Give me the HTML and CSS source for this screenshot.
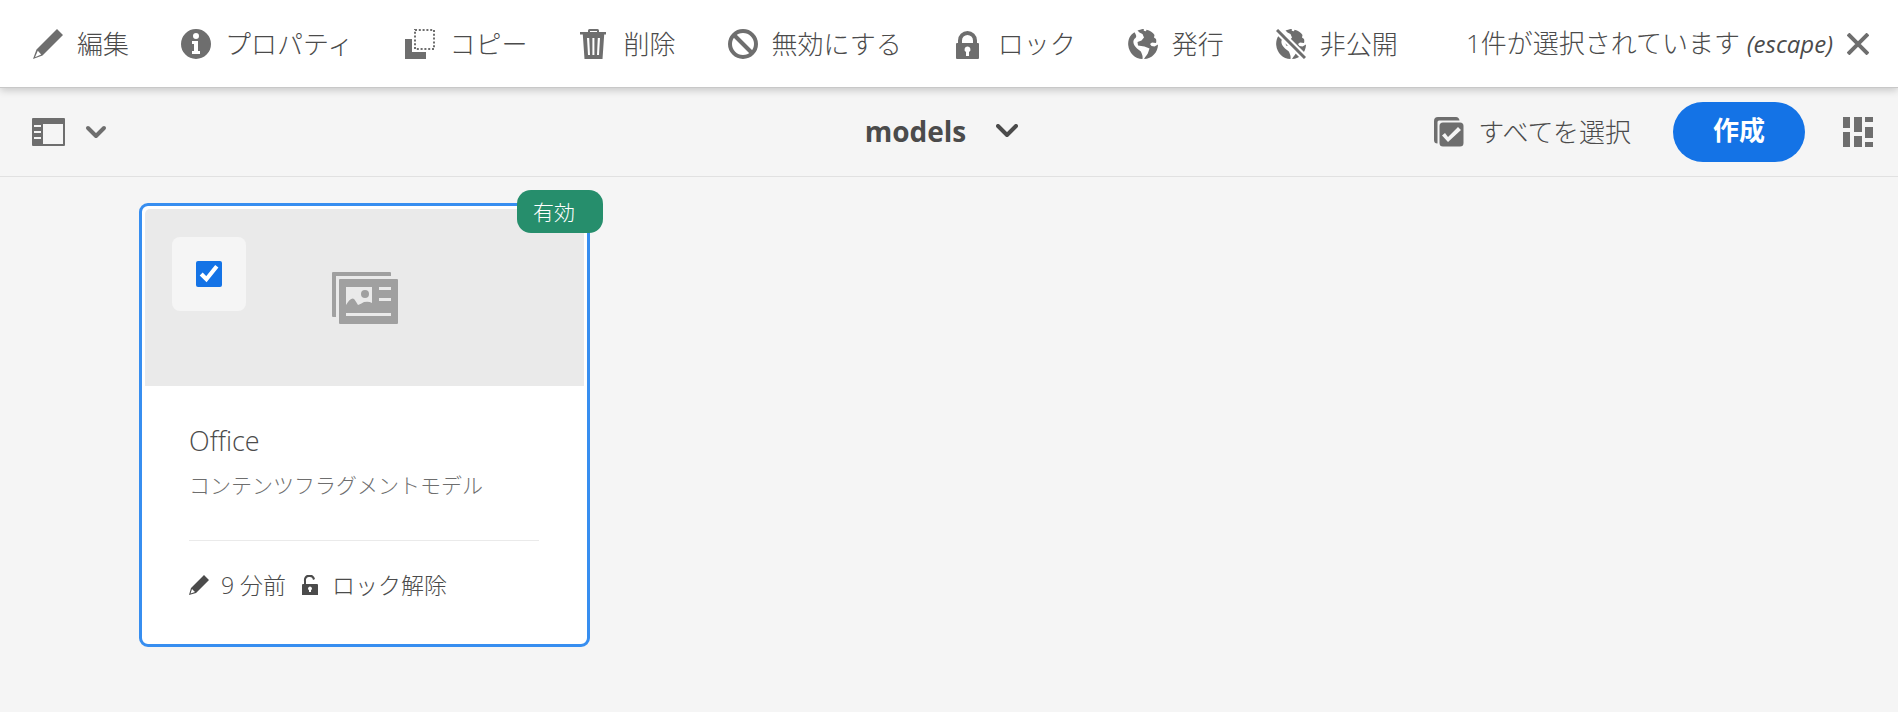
FILE: index.html
```html
<!DOCTYPE html>
<html lang="ja">
<head>
<meta charset="utf-8">
<meta name="viewport" content="width=device-width, initial-scale=1">
<title>models</title>
<link rel="stylesheet" href="styles.css">
</head>
<body>
<header class="selection-bar">
  <div class="actions" role="toolbar">
    <button class="action" type="button">
      <svg class="icon" viewBox="0 0 30 30"><path d="M24 0l6 6L9.500 26.500 0 30l3.500-9.500zM4.800 21.800L2 28.200l6.200-2.600z" fill-rule="evenodd"/></svg>
      <span>編集</span>
    </button>
    <button class="action" type="button">
      <svg class="icon" viewBox="0 0 30 30"><path fill-rule="evenodd" d="M15 0a15 15 0 1 0 0 30 15 15 0 0 0 0-30zm0 4a3 3 0 1 1 0 6 3 3 0 0 1 0-6zm-4 8h6v10h2v3h-8v-3h2v-7h-2z"/></svg>
      <span>プロパティ</span>
    </button>
    <button class="action" type="button">
      <svg class="icon" viewBox="0 0 30 30"><path d="M0 10h7v13h14v7H0z"/><rect x="10" y="1" width="19" height="19" fill="none" stroke="currentColor" stroke-width="2" stroke-dasharray="2 1.800"/></svg>
      <span>コピー</span>
    </button>
    <button class="action" type="button">
      <svg class="icon" viewBox="0 0 30 30"><path fill-rule="evenodd" d="M9 3V1.500Q9 0 10.500 0h8Q20 0 20 1.500V3h7v2.500h-1.800L23.500 30h-18L3.800 5.500H1V3zm2 0h7V2h-7zM8 9l1 17h2L10.200 9zm5.400 0v17h2V9zm5.400 0L18 26h2L21 9z"/></svg>
      <span>削除</span>
    </button>
    <button class="action" type="button">
      <svg class="icon" viewBox="0 0 30 30" fill="none" stroke="currentColor" stroke-width="4"><circle cx="15" cy="15" r="13"/><path d="M6 6l18 18"/></svg>
      <span>無効にする</span>
    </button>
    <button class="action" type="button">
      <svg class="icon" viewBox="0 0 30 30"><path fill-rule="evenodd" d="M4 14v-2.500a9.500 9.500 0 0 1 19 0V14h1q1 0 1 1v14q0 1-1 1H3q-1 0-1-1V15q0-1 1-1zm4 0h11v-2.500a5.500 5.500 0 0 0-11 0zM13.500 17.500a3 3 0 0 0-1.500 5.600V27h3v-3.900a3 3 0 0 0-1.500-5.600z"/></svg>
      <span>ロック</span>
    </button>
    <button class="action" type="button">
      <svg class="icon" viewBox="0 0 30 30"><path d="M6.500 3.200C1.500 6 0 11 .2 16 1 24 7 30 14.500 30c.5-3-.5-4.500-1-6-.5-2.500-3-3-4.500-4.500C7 17.500 6 16 5.500 14 5 11.500 6 10 7.500 9 9 7.500 8 5.500 6.500 3.200zM9.500 1.500l5-1.500 1.500.2-.3 1.500 2.300.5.500-1.500C22 1.500 25 3.500 26.500 6l-.5 2.500 2 1.500c.5 2 .3 3 0 4l-4-.5-2 1.500 1.500 2 3 .5 3.500-2C30 23 24 30 16 30c1.500-3 4-4.500 4.500-7.500l1-3-5-2-6.500-1-.5-3.500 4-1.500 2.500-3-1.500-3.500-3-1.500z"/></svg>
      <span>発行</span>
    </button>
    <button class="action" type="button">
      <svg class="icon" viewBox="0 0 30 30"><path d="M6.500 3.200C1.500 6 0 11 .2 16 1 24 7 30 14.500 30c.5-3-.5-4.500-1-6-.5-2.500-3-3-4.500-4.500C7 17.500 6 16 5.500 14 5 11.500 6 10 7.500 9 9 7.500 8 5.500 6.500 3.200zM9.500 1.500l5-1.500 1.500.2-.3 1.500 2.300.5.500-1.500C22 1.500 25 3.500 26.500 6l-.5 2.500 2 1.500c.5 2 .3 3 0 4l-4-.5-2 1.500 1.500 2 3 .5 3.500-2C30 23 24 30 16 30c1.500-3 4-4.500 4.500-7.500l1-3-5-2-6.500-1-.5-3.500 4-1.500 2.500-3-1.500-3.500-3-1.500z"/><path d="M1 1l28 28" stroke="#fff" stroke-width="7"/><path d="M1 1l28 28" stroke="currentColor" stroke-width="3"/></svg>
      <span>非公開</span>
    </button>
  </div>
  <button class="deselect" type="button">
    <span>1件が選択されています <em>(escape)</em></span>
    <svg class="close" viewBox="0 0 22 22" fill="none" stroke="currentColor" stroke-width="4"><path d="M1 1l20 20M21 1L1 21"/></svg>
  </button>
</header>

<nav class="view-bar">
  <button class="rail-toggle" type="button" aria-label="サイドパネル">
    <svg class="rail-icon" viewBox="0 0 33 28"><path fill-rule="evenodd" d="M1 0h31q1 0 1 1v26q0 1-1 1H1q-1 0-1-1V1q0-1 1-1zm10 6v20h20V6zM2 7v2h7V7zm0 6v2h7v-2zm0 6v2h7v-2z"/></svg>
    <svg class="chevron" viewBox="0 0 22 14"><path d="M3 3l8 8 8-8"/></svg>
  </button>
  <button class="crumb" type="button">
    <span>models</span>
    <svg class="chevron" viewBox="0 0 22 14"><path d="M2 2l9 9 9-9"/></svg>
  </button>
  <div class="view-tools">
    <button class="select-all" type="button">
      <svg class="icon" viewBox="0 0 30 30"><path d="M4 0h18q3 0 3.500 3.500H5Q3.500 3.500 3.500 5v21.500Q0 26.500 0 23V4q0-4 4-4z"/><path fill-rule="evenodd" d="M9 5.500h17q3.500 0 3.500 3.500v17q0 3.500-3.500 3.500H9q-3.500 0-3.500-3.500V9q0-3.500 3.500-3.500zM8 18.500l6 6.500L27 13l-3-3-10 10-3-4z"/></svg>
      <span>すべてを選択</span>
    </button>
    <button class="create" type="button">作成</button>
    <button class="layout-toggle" type="button" aria-label="カード表示">
      <svg class="icon" viewBox="0 0 30 30"><path d="M0 0h7v11H0zM0 15h7v15H0zM11 0h8v15h-8zM11 19h8v11h-8zM22 0h8v5h-8zM22 10h8v11h-8zM22 25h8v5h-8z"/></svg>
    </button>
  </div>
</nav>

<main class="collection">
  <article class="card">
    <div class="asset">
      <label class="tick"><input type="checkbox" checked aria-label="Office を選択"></label>
      <svg class="model-icon" viewBox="0 0 66 52"><path d="M1 0h57q1 0 1 1v3H4v41H1q-1 0-1-1V1q0-1 1-1z"/><path fill-rule="evenodd" d="M8 7h57q1 0 1 1v43q0 1-1 1H8q-1 0-1-1V8q0-1 1-1zm6 8v18q5-8 8-6 1 1 4 6 3-1 6-3 5-1 8 1V15zm33 0v3h12v-3zm0 11v3h12v-3zM14 41v3h45v-3z"/><circle cx="33" cy="22" r="4"/></svg>
    </div>
    <div class="content">
      <h2 class="title">Office</h2>
      <p class="kind">コンテンツフラグメントモデル</p>
      <div class="meta">
        <svg class="small-icon" viewBox="0 0 20 20"><path fill-rule="evenodd" d="M15 0l5 5L7 18l-7 2 2-7zM3 14l-1.500 4.500L6 17z"/></svg>
        <time>9 分前</time>
        <svg class="small-icon lock-state" viewBox="0 0 20 20"><path fill-rule="evenodd" d="M4 9V6a5.500 5.500 0 0 1 11-2l-2 1a3.500 3.500 0 0 0-7 1v3h11q1 0 1 1v10H2V10q0-1 1-1zm6 2.500a2 2 0 0 0-1 3.700V17h2v-1.800a2 2 0 0 0-1-3.700z"/></svg>
        <span>ロック解除</span>
      </div>
    </div>
    <span class="badge">有効</span>
  </article>
</main>
</body>
</html>
```
FILE: styles.css
```css
* { box-sizing: border-box; }

body {
  margin: 0;
  min-height: 100vh;
  background: #f5f5f5;
  color: #4b4b4b;
  font-family: "Open Sans", "Noto Sans CJK JP", sans-serif;
  font-size: 26px;
  font-weight: 300;
  line-height: 36px;
}

button {
  display: flex;
  align-items: center;
  padding: 0;
  border: 0;
  background: none;
  color: inherit;
  font: inherit;
  white-space: nowrap;
  cursor: pointer;
}

svg { display: block; flex: none; color: #6e6e6e; fill: currentColor; }
svg[fill="none"] { fill: none; }

.icon { width: 30px; height: 30px; }

.selection-bar {
  position: relative;
  display: flex;
  align-items: center;
  justify-content: space-between;
  height: 88px;
  padding: 0 29px 0 33px;
  background: #fff;
  border-bottom: 1px solid #c8c8c8;
  box-shadow: 0 2px 8px rgba(0, 0, 0, 0.2);
}

.actions { display: flex; gap: 52px; }
.action { gap: 14px; }
.deselect { gap: 14px; }
.deselect em { font-size: 24px; font-weight: 400; }
.close { width: 22px; height: 22px; }

.view-bar {
  display: grid;
  grid-template-columns: 1fr auto 1fr;
  align-items: center;
  height: 89px;
  padding: 0 25px 0 32px;
  border-bottom: 1px solid #e1e1e1;
}

.rail-toggle { gap: 20px; justify-self: start; }
.rail-icon { width: 33px; height: 28px; }

.chevron {
  width: 22px;
  height: 14px;
  fill: none;
  stroke: currentColor;
  stroke-width: 4;
  stroke-linecap: round;
  stroke-linejoin: round;
}

.crumb {
  gap: 30px;
  margin-right: 22px;
  padding-bottom: 3px;
  font-size: 28px;
  font-weight: 700;
}
.crumb .chevron { color: #4b4b4b; }

.view-tools { display: flex; align-items: center; justify-self: end; gap: 38px; }
.select-all { gap: 14px; margin-right: 4px; }

.create {
  height: 60px;
  padding: 0 40px 4px;
  border-radius: 30px;
  background: #1473e6;
  color: #fff;
  font-weight: 700;
}

.collection { padding: 26px 139px; }

.card {
  position: relative;
  width: 451px;
  padding: 3px;
  border: 3px solid #378ef0;
  border-radius: 9px;
  background: #fff;
}

.badge {
  position: absolute;
  top: -16px;
  right: -16px;
  padding: 4px 28px 3px 16px;
  border-radius: 14px;
  background: #268e6c;
  color: #fff;
  font-size: 21px;
}

.asset {
  position: relative;
  display: flex;
  align-items: center;
  justify-content: center;
  height: 177px;
  border-radius: 5px 5px 0 0;
  background: #eaeaea;
}

.tick {
  position: absolute;
  top: 28px;
  left: 27px;
  display: grid;
  place-items: center;
  width: 74px;
  height: 74px;
  border-radius: 8px;
  background: #f5f5f5;
}

.tick input { width: 26px; height: 26px; margin: 0; accent-color: #1473e6; }

.model-icon { width: 66px; height: 52px; color: #a0a0a0; }

.content { padding: 37px 45px 38px 44px; }
.title { margin: 0; font-size: 27px; font-weight: 300; }
.kind { margin: 8px 0 37px; font-size: 21px; color: #6e6e6e; }

.meta {
  display: flex;
  align-items: center;
  padding-top: 26px;
  border-top: 1px solid #eaeaea;
  font-size: 23px;
}

.small-icon { width: 20px; height: 20px; margin-right: 12px; color: #4b4b4b; }
.lock-state { margin-left: 14px; }
```
